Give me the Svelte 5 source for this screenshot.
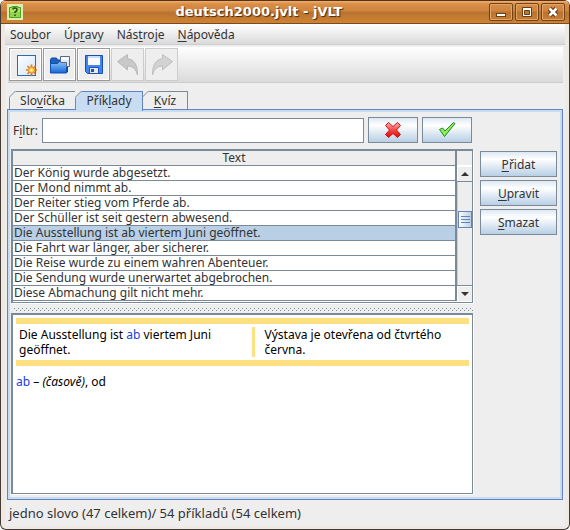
<script>
  const menus = [
    ['Sou', 'b', 'or'],
    ['Úp', 'r', 'avy'],
    ['Nás', 't', 'roje'],
    ['', 'N', 'ápověda']
  ];
  const tabs = [
    { label: ['Slo', 'v', 'íčka'], width: 67 },
    { label: ['Přík', 'l', 'ady'], width: 67 },
    { label: ['', 'K', 'víz'], width: 45 }
  ];
  let activeTab = $state(1);
  let filter = $state('');
  let selected = $state(4);
  const rows = [
    'Der König wurde abgesetzt.',
    'Der Mond nimmt ab.',
    'Der Reiter stieg vom Pferde ab.',
    'Der Schüller ist seit gestern abwesend.',
    'Die Ausstellung ist ab viertem Juni geöffnet.',
    'Die Fahrt war länger, aber sicherer.',
    'Die Reise wurde zu einem wahren Abenteuer.',
    'Die Sendung wurde unerwartet abgebrochen.',
    'Diese Abmachung gilt nicht mehr.'
  ];
  const actions = [
    ['', 'P', 'řidat'],
    ['', 'U', 'pravit'],
    ['', 'S', 'mazat']
  ];
</script>

{#snippet mnemonic(parts)}{parts[0]}<u>{parts[1]}</u>{parts[2]}{/snippet}

<div class="window">
  <header class="titlebar">
    <svg class="app-icon" width="16" height="16" viewBox="0 0 16 16" aria-hidden="true">
      <rect width="16" height="16" fill="#d8efb0" />
      <path d="M2.500 3.500H5v-1h6v1h2.500v10h-11z" fill="#8fd648" stroke="#5a9c26" />
      <path d="M3 4h10v4H3z" fill="#ace468" />
      <path d="M6 5.500Q6 4 8 4t2 1.700Q10 7 8 8v1M8 10.500V12" fill="none" stroke="#2c4a16" stroke-width="1.600" />
    </svg>
    <h1>deutsch2000.jvlt - jVLT</h1>
    <div class="controls">
      <button aria-label="Minimalizovat">
        <svg width="22" height="16" viewBox="0 0 22 16"><rect x="6.500" y="9.500" width="9" height="3" fill="#fff" stroke="#6b3f12" /></svg>
      </button>
      <button aria-label="Maximalizovat">
        <svg width="22" height="16" viewBox="0 0 22 16"><path d="M6.500 3.500h9v9h-9z" fill="#fff" stroke="#6b3f12" /><path d="M8.500 6.500h5v4h-5z" fill="#b97a35" stroke="#6b3f12" /></svg>
      </button>
      <button aria-label="Zavřít">
        <svg width="22" height="16" viewBox="0 0 22 16"><path d="M7.500 4.500l7 7m0-7l-7 7" stroke="#6b3f12" stroke-width="5" /><path d="M7.500 4.500l7 7m0-7l-7 7" stroke="#fff" stroke-width="2.500" /></svg>
      </button>
    </div>
  </header>

  <div class="client">
    <nav class="menubar">
      {#each menus as menu}
        <button>{@render mnemonic(menu)}</button>
      {/each}
    </nav>

    <div class="toolbar">
      <button aria-label="Nový">
        <svg width="24" height="24" viewBox="0 0 24 24">
          <defs>
            <linearGradient id="paper" x2="1" y2="1"><stop offset="0" stop-color="#fff" /><stop offset="1" stop-color="#cfe4fa" /></linearGradient>
          </defs>
          <rect x="3.500" y="2.500" width="18" height="20" fill="url(#paper)" stroke="#2f6aa8" />
          <path d="M17.500 11.500v11M12 17h11M13.500 13l8 8m0-8l-8 8" stroke="#e07818" stroke-width="1.700" />
          <circle cx="17.500" cy="17" r="3" fill="#ffd34a" stroke="#e88a22" />
          <circle cx="17.500" cy="17" r="1" fill="#fff" />
        </svg>
      </button>
      <button aria-label="Otevřít">
        <svg width="24" height="24" viewBox="0 0 24 24">
          <defs>
            <linearGradient id="folder" x2="0" y2="1"><stop offset="0" stop-color="#8cc4fa" /><stop offset="1" stop-color="#1567d8" /></linearGradient>
          </defs>
          <path d="M2.500 19V6.500l1-1.500h5l1 2h10V19z" fill="#1d62c0" stroke="#0b479b" />
          <path d="M2.500 20V10.500h7l2-2h7V20z" fill="url(#folder)" stroke="#0f50b2" />
          <path d="M12.500 3.500h9v10h-3v-4h-6z" fill="#dfe7f5" stroke="#54698e" />
          <path d="M13 4h8v3h-8z" fill="#fff" fill-opacity=".8" />
        </svg>
      </button>
      <button aria-label="Uložit">
        <svg width="24" height="24" viewBox="0 0 24 24">
          <path d="M3.500 2.500h17v18h-15l-2-2z" fill="#4384ee" stroke="#164fae" />
          <path d="M6 3h12v9H6z" fill="#fafcff" />
          <path d="M6 3h12v2H6z" fill="#c9dcfa" />
          <path d="M7.500 14.500h9v6h-9z" fill="#e5e8ef" stroke="#2155ac" />
          <path d="M9 16h3v3H9z" fill="#29529d" />
        </svg>
      </button>
      <button aria-label="Zpět" disabled>
        <svg width="24" height="24" viewBox="0 0 24 24"><path d="M1.500 8.500L11.500 1.500v4Q22 7 21.500 22q-2-9-10-9v4z" fill="#c9c9c9" stroke="#b9b9b9" /></svg>
      </button>
      <button aria-label="Znovu" disabled>
        <svg width="24" height="24" viewBox="0 0 24 24"><path d="M22.500 8.500L12.500 1.500v4Q2 7 2.500 22q2-9 10-9v4z" fill="#d2d2d2" stroke="#c0c0c0" /></svg>
      </button>
    </div>

    <div class="tabs" role="tablist">
      {#each tabs as tab, i}
        <button role="tab" aria-selected={i === activeTab} class:active={i === activeTab} style:width="{tab.width}px" onclick={() => (activeTab = i)}>
          <svg width="7" height="7" viewBox="0 0 7 7" aria-hidden="true"><path d="M0 0h7L0 7z" fill="#eee" /><path d="M0 6.500L6.500 0" stroke="#7a8a99" /></svg>
          <span>{@render mnemonic(tab.label)}</span>
        </button>
      {/each}
    </div>

    <main class="panel">
      <section class="content">
        <form class="filter" onsubmit={(e) => e.preventDefault()}>
          <label for="filter">F<u>i</u>ltr:</label>
          <input id="filter" type="text" bind:value={filter} />
          <button type="button" class="metal" aria-label="Zrušit filtr" onclick={() => (filter = '')}>
            <svg width="18" height="18" viewBox="0 0 18 18">
              <defs><linearGradient id="red" x2="0" y2="1"><stop offset="0" stop-color="#ffb0a8" /><stop offset=".55" stop-color="#f04040" /><stop offset="1" stop-color="#e00808" /></linearGradient></defs>
              <path d="M4.500 1.500L9 5.500l4.500-4 3 3L12.500 9l4 4.500-3 3L9 12.500l-4.500 4-3-3L5.500 9l-4-4.500z" fill="url(#red)" stroke="#c81414" stroke-linejoin="round" />
            </svg>
          </button>
          <button class="metal" aria-label="Použít filtr">
            <svg width="18" height="18" viewBox="0 0 18 18">
              <path d="M1.500 8.500l3-1.500L7 10l8.500-8.500 1.500 1L6.500 15.500z" fill="#8df04e" stroke="#23852c" stroke-linejoin="round" />
            </svg>
          </button>
        </form>

        <div class="list">
          <table>
            <thead><tr><th>Text</th></tr></thead>
            <tbody>
              {#each rows as row, i}
                <tr class:selected={i === selected} onclick={() => (selected = i)}><td>{row}</td></tr>
              {/each}
            </tbody>
          </table>
          <div class="scroll">
            <div class="corner"></div>
            <button class="up" aria-label="Nahoru"><svg width="8" height="4" viewBox="0 0 8 4"><path d="M0 4l4-4 4 4z" fill="#333" /></svg></button>
            <div class="track"><div class="thumb"><i></i><i></i><i></i></div></div>
            <button class="down" aria-label="Dolů"><svg width="8" height="4" viewBox="0 0 8 4"><path d="M0 0h8L4 4z" fill="#333" /></svg></button>
          </div>
        </div>

        <div class="divider"></div>

        <article class="detail">
          <div class="example">
            <p>Die Ausstellung ist <a href="#ab">ab</a> viertem Juni geöffnet.</p>
            <p>Výstava je otevřena od čtvrtého června.</p>
          </div>
          <p class="entry"><a href="#ab">ab</a> – <em>(časově)</em>, od</p>
        </article>
      </section>

      <aside>
        {#each actions as action}
          <button class="metal"><span>{@render mnemonic(action)}</span></button>
        {/each}
      </aside>
    </main>

    <footer>jedno slovo (47 celkem)/ 54 příkladů (54 celkem)</footer>
  </div>
</div>

<style>
  :global(body) { background: #fff; }
  * { box-sizing: border-box; }
  .window {
    display: flex;
    flex-direction: column;
    min-height: 100vh;
    border: 1px solid #443a36;
    border-top: 0;
    border-radius: 6px;
    background: #efe9e3;
    overflow: hidden;
    font: 12px/15px "Noto Sans", "Open Sans", sans-serif;
    color: #333;
  }
  button, input { font: inherit; color: inherit; margin: 0; padding: 0; }
  svg { display: block; }
  u { text-underline-offset: 2px; text-decoration-skip-ink: none; }
  p, h1 { margin: 0; }
  .titlebar {
    display: flex;
    align-items: center;
    height: 24px;
    padding: 0 4px 0 6px;
    border-top: 1px solid #55321a;
    border-bottom: 1px solid #7c4a1c;
    background: linear-gradient(#f0b06c, #d98d45 3px, #cf8440 10px, #b87330 11px, #cd8133 21px);
  }
  h1 {
    flex: 1;
    padding-left: 6px;
    text-align: center;
    font: bold 13px/20px "DejaVu Sans", sans-serif;
    color: #fff;
    text-shadow: 1px 1px 1px #4a2a0c;
  }
  .controls { display: flex; gap: 2px; }
  .controls button {
    width: 24px;
    height: 18px;
    border: 1px solid #70431a;
    border-radius: 2px;
    background: transparent;
    box-shadow: inset 0 0 0 1px #dda66c;
  }
  .client {
    display: flex;
    flex: 1;
    flex-direction: column;
    margin: 0 4px 3px;
    background: #eee;
  }
  .menubar {
    display: flex;
    gap: 13px;
    height: 21px;
    padding: 0 5px;
    border-bottom: 1px solid #ccc;
    background: linear-gradient(#fff, #dadada);
  }
  .menubar button { border: 0; background: none; }
  .toolbar {
    display: flex;
    gap: 1px;
    margin: 2px 2px 0 3px;
    padding: 1px;
    border-bottom: 1px solid #ccc;
    background: linear-gradient(#fff, #dadada);
  }
  .toolbar button {
    display: grid;
    place-items: center;
    width: 33px;
    height: 33px;
    border: 1px solid #999;
    background: #eee;
    box-shadow: inset 0 0 0 1px #fff;
  }
  .toolbar button:disabled { border-color: #ccc; box-shadow: none; }
  .tabs { display: flex; align-items: flex-start; height: 18px; margin: 8px 0 0 4px; }
  .tabs button {
    position: relative;
    display: flex;
    justify-content: center;
    height: 18px;
    border: 1px solid #7a8a99;
    border-width: 1px 1px 0 0;
    background: #eee;
  }
  .tabs button:first-child { border-left-width: 1px; }
  .tabs svg { position: absolute; left: -1px; top: -1px; }
  .tabs .active { z-index: 1; height: 20px; border-color: #6382bf; background: #c8ddf2; }
  .tabs span { line-height: 18px; }
  .panel {
    display: flex;
    flex: 1;
    gap: 7px;
    margin: 0 2px;
    padding: 7px 5px 3px 2px;
    border: 1px solid #6382bf;
    box-shadow: inset 0 0 0 2px #c8ddf2;
  }
  .content { display: flex; flex: 1; flex-direction: column; min-width: 0; }
  .filter { display: flex; align-items: center; gap: 4px; height: 26px; padding: 0 1px 0 3px; }
  .filter input {
    flex: 1;
    min-width: 0;
    height: 25px;
    border: 1px solid #7a8a99;
    background: #fff;
    outline: 0;
  }
  .metal {
    display: grid;
    place-content: center;
    height: 26px;
    border: 1px solid #7a8a99;
    background: linear-gradient(#dde8f3, #fff 30%, #b8cfe5);
  }
  .filter .metal { width: 50px; }
  .list {
    display: flex;
    margin: 6px 0 0 1px;
    padding-bottom: 1px;
    border: 2px solid #7a8a99;
    border-right-width: 1px;
    border-bottom-width: 1px;
    background: #fff;
    box-shadow: 1px 1px #fff;
  }
  table { flex: 1; border-collapse: separate; border-spacing: 0; }
  th, td { height: 15px; padding: 0 1px; border-bottom: 1px solid #7a8a99; line-height: 14px; }
  th { background: #eee; font-weight: normal; }
  td { text-align: left; }
  .selected td { background: #b8cfe5; }
  .scroll {
    display: flex;
    flex-direction: column;
    width: 17px;
    border-left: 2px solid #7a8a99;
    background: #eee;
  }
  .corner { height: 15px; border-bottom: 1px solid #fff; }
  .scroll button {
    display: grid;
    place-items: center;
    height: 16px;
    border: 0;
    border-bottom: 1px solid #7a8a99;
    background: #eee;
    box-shadow: inset 1px 1px #fff;
  }
  .scroll .down { border-top: 1px solid #7a8a99; border-bottom: 0; }
  .track { flex: 1; padding-top: 29px; border-left: 1px solid #b8cfe5; }
  .thumb {
    display: flex;
    flex-direction: column;
    align-items: center;
    justify-content: center;
    gap: 2px;
    height: 17px;
    border: 1px solid #6382bf;
    background: linear-gradient(90deg, #fff, #b8cfe5);
  }
  .thumb i { width: 9px; height: 1px; background: #6382bf; }
  .divider {
    height: 4px;
    margin: 4px 0 2px 3px;
    background:
      conic-gradient(from 90deg at 3px 3px, #7a8a99 25%, transparent 0) 0 0 / 4px 4px,
      conic-gradient(from 90deg at 3px 3px, #7a8a99 25%, transparent 0) 2px 2px / 4px 4px;
  }
  .detail {
    flex: 1;
    margin: 0 0 2px 1px;
    padding: 3px;
    border: 2px solid #7a8a99;
    border-right-width: 1px;
    border-bottom-width: 1px;
    background: #fff;
    box-shadow: 1px 1px #fff;
    color: #000;
  }
  .detail a { color: #2040e0; text-decoration: none; }
  .example {
    display: grid;
    grid-template-columns: 235fr 217fr;
    padding: 3px 0;
    border: solid #ffe080;
    border-width: 6px 0;
  }
  .example p { padding: 0 3px; }
  .example p + p { padding-left: 10px; border-left: 3px solid #ffe080; }
  .entry { padding: 8px 0; }
  aside { display: flex; flex-direction: column; gap: 3px; width: 77px; padding-top: 34px; }
  footer { padding: 6px 4px 5px; font-size: 13px; }
</style>
